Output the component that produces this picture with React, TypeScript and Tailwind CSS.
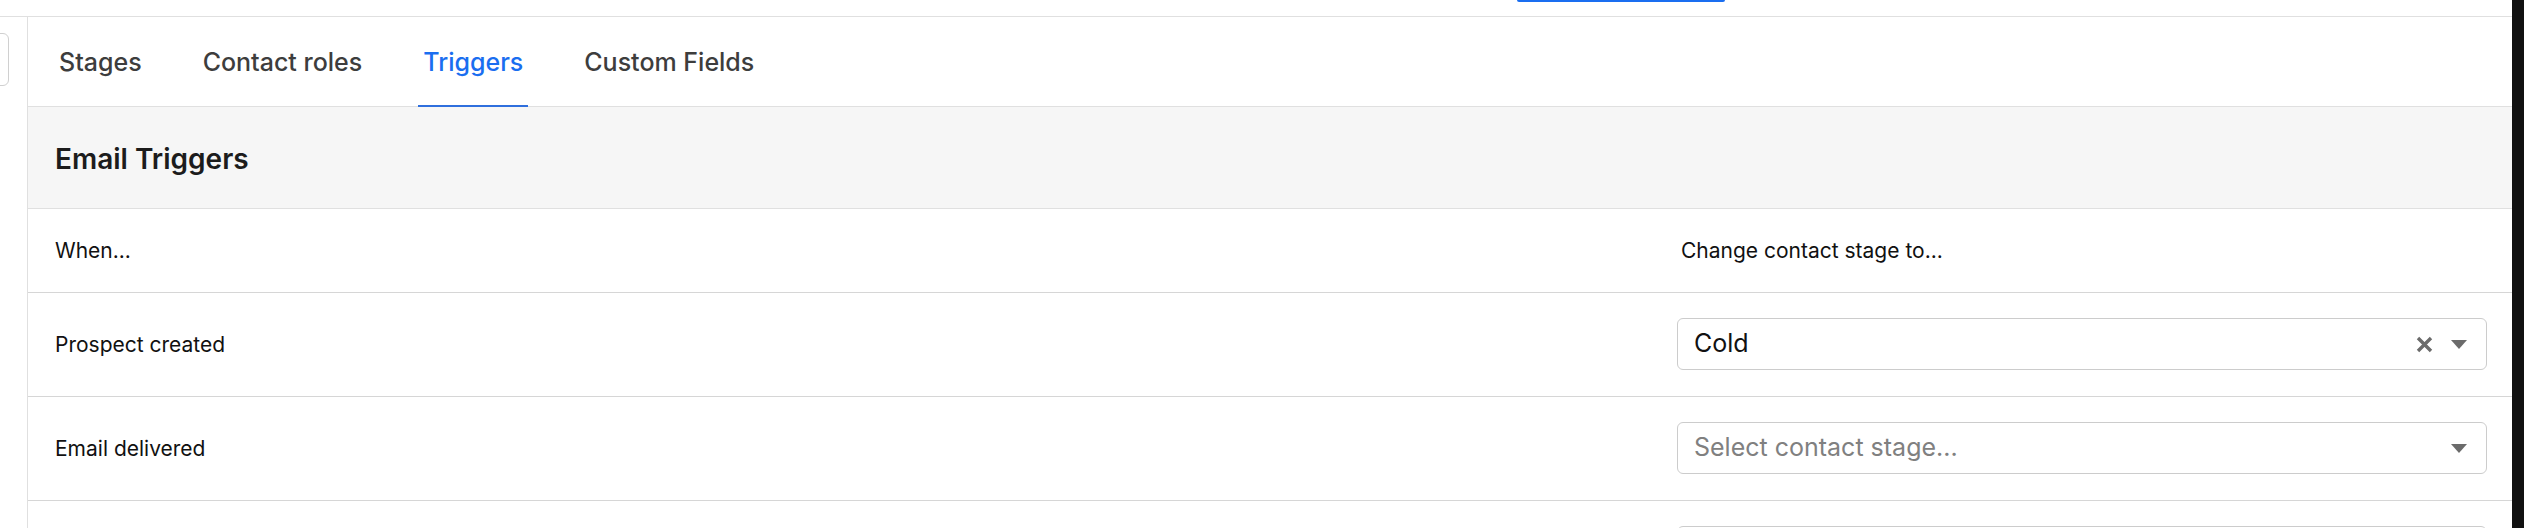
type Trigger = {
  id: string;
  label: string;
  stage: string | null;
};

const tabs = ['Stages', 'Contact roles', 'Triggers', 'Custom Fields'];

const triggers: Trigger[] = [
  { id: 'prospect-created', label: 'Prospect created', stage: 'Cold' },
  { id: 'email-delivered', label: 'Email delivered', stage: null },
  { id: 'email-opened', label: 'Email opened', stage: null },
];

function ClearIcon() {
  return (
    <svg width="17" height="17" viewBox="0 0 17 17" className="shrink-0">
      <path d="M2 2l13 13M15 2L2 15" stroke="#6b6b6b" strokeWidth="3.4" strokeLinecap="butt" />
    </svg>
  );
}

function Caret() {
  return (
    <svg width="16" height="9" viewBox="0 0 16 9" className="shrink-0">
      <path d="M0 0h16L8 9z" fill="#6b6b6b" />
    </svg>
  );
}

function StageSelect({ value }: { value: string | null }) {
  return (
    <div className="flex h-[52px] items-center rounded-[6px] border border-[#cccccc] bg-white pl-[16px] pr-[19px]">
      <span className={`flex-1 truncate text-[25px] ${value ? 'text-[#111111]' : 'text-[#808080]'}`}>
        {value ?? 'Select contact stage...'}
      </span>
      {value && (
        <span className="mr-[18px] flex">
          <ClearIcon />
        </span>
      )}
      <Caret />
    </div>
  );
}

export default function App() {
  const active = 'Triggers';

  return (
    <div className="flex h-[528px] w-[2524px] overflow-hidden bg-white font-['Inter',sans-serif]">
      <div className="flex flex-1 flex-col">
        {/* top bar, only the bottom edge of the action button shows */}
        <div className="flex h-[17px] shrink-0 border-b border-[#e0e0e0]">
          <div className="ml-[1517px] h-[2px] w-[208px] rounded-b-[2px] bg-[#1a6ef0]" />
        </div>

        <div className="flex flex-1">
          {/* sidebar edge with the search box cut off */}
          <div className="w-[28px] shrink-0 border-r border-[#e0e0e0] pt-[16px]">
            <div className="ml-[-20px] h-[53px] w-[29px] rounded-[6px] border border-[#d0d0d0]" />
          </div>

          <div className="flex flex-1 flex-col">
            <nav className="flex h-[90px] shrink-0 items-stretch gap-[51px] border-b border-[#e0e0e0] pl-[26px]">
              {tabs.map((tab) => (
                <div
                  key={tab}
                  className={`mb-[-1px] flex items-center border-b-2 px-[5px] pt-[3px] text-[25px] font-medium ${
                    tab === active ? 'border-[#2f6fdd] text-[#1a6ef0]' : 'border-transparent text-[#3d3d3d]'
                  }`}
                >
                  {tab}
                </div>
              ))}
            </nav>

            <div className="flex h-[102px] shrink-0 items-center border-b border-[#e0e0e0] bg-[#f6f6f6] pl-[27px] pt-[2px]">
              <h2 className="text-[28px] font-semibold text-[#1c1c1c]">Email Triggers</h2>
            </div>

            <div className="grid grid-cols-[1fr_835px]">
              <div className="flex h-[84px] items-center border-b border-[#d6d6d6] pl-[27px] text-[21px] text-[#111111]">
                When...
              </div>
              <div className="flex h-[84px] items-center border-b border-[#d6d6d6] pl-[4px] text-[21px] text-[#111111]">
                Change contact stage to...
              </div>

              {triggers.map((t) => (
                <div key={t.id} className="contents">
                  <div className="flex h-[104px] items-center border-b border-[#d6d6d6] pl-[27px] text-[21px] text-[#111111]">
                    {t.label}
                  </div>
                  <div className="h-[104px] border-b border-[#d6d6d6] pr-[25px] pt-[25px]">
                    <StageSelect value={t.stage} />
                  </div>
                </div>
              ))}
            </div>
          </div>
        </div>
      </div>

      {/* window edge */}
      <div className="w-[12px] shrink-0 bg-[#111111]" />
    </div>
  );
}
